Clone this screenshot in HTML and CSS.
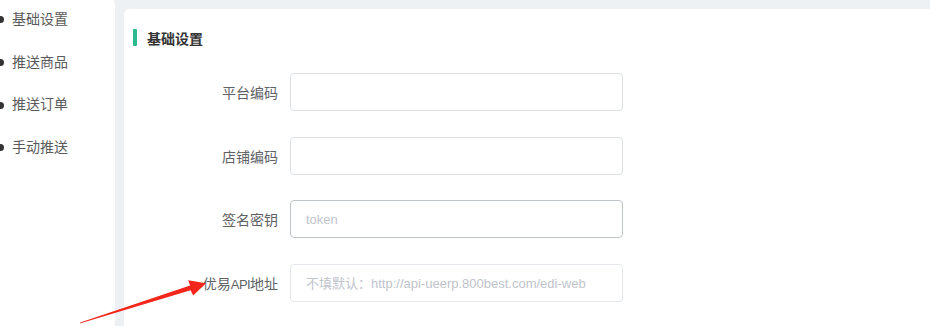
FILE: index.html
```html
<!DOCTYPE html>
<html lang="zh">
<head>
<meta charset="utf-8">
<title>基础设置</title>
<link rel="stylesheet" href="styles.css">
</head>
<body>
<div class="page">
  <aside class="sidebar">
    <ul class="menu">
      <li class="menu-item"><span class="dot"></span>基础设置</li>
      <li class="menu-item"><span class="dot"></span>推送商品</li>
      <li class="menu-item"><span class="dot"></span>推送订单</li>
      <li class="menu-item"><span class="dot"></span>手动推送</li>
    </ul>
  </aside>
  <main class="card">
    <h2 class="section-title"><span class="bar"></span>基础设置</h2>
    <form class="form">
      <div class="form-item">
        <label class="form-label">平台编码</label>
        <input class="input" type="text">
      </div>
      <div class="form-item">
        <label class="form-label">店铺编码</label>
        <input class="input" type="text">
      </div>
      <div class="form-item gap-small">
        <label class="form-label">签名密钥</label>
        <input class="input input-hover" type="text" placeholder="token">
      </div>
      <div class="form-item">
        <label class="form-label">优易<span class="latin">API</span>地址</label>
        <input class="input input-light" type="text" placeholder="不填默认：http://api-ueerp.800best.com/edi-web">
      </div>
    </form>
  </main>
  <svg class="arrow" width="930" height="326" viewBox="0 0 930 326">
    <polygon fill="#f2261b" points="79.8,323.5 190.6,290.2 193.2,295.5 206,283.2 188.2,280.2 190.1,285.5 80.2,322.5"/>
  </svg>
</div>
</body>
</html>
```

FILE: styles.css
```css
* { box-sizing: border-box; }
html, body {
  margin: 0;
  padding: 0;
}
body {
  background: #eef1f4;
  font-family: "Liberation Sans", "Noto Sans CJK SC", sans-serif;
  font-size: 14px;
  color: #606266;
  width: 930px;
  height: 326px;
  overflow: hidden;
}
.page {
  position: relative;
  display: flex;
  gap: 9px;
  height: 326px;
}
.sidebar {
  width: 115px;
  flex: none;
  background: #fff;
  border-top-right-radius: 8px;
  margin-top: -3px;
}
.menu {
  list-style: none;
  margin: 0;
  padding: 0;
}
.menu-item {
  position: relative;
  height: 42.67px;
  line-height: 42.67px;
  padding-left: 12px;
  color: #5a5a5a;
  font-size: 14px;
}
.menu-item:first-child { margin-top: 1px; }
.dot {
  position: absolute;
  left: -3px;
  top: 50%;
  width: 7px;
  height: 7px;
  margin-top: -3px;
  border-radius: 50%;
  background: #333;
}
.card {
  flex: 1;
  margin-top: 9px;
  background: #fff;
  border-top-left-radius: 6px;
  padding: 20px 0 0 9px;
}
.section-title {
  display: flex;
  align-items: center;
  gap: 10px;
  margin: 0;
  height: 17px;
  font-size: 14px;
  font-weight: bold;
  color: #333;
}
.bar {
  width: 4px;
  height: 17px;
  background: #2bb98f;
  border-radius: 1px;
}
.form {
  margin: 27px 0 0 45px;
}
.form-item {
  display: flex;
  align-items: center;
  margin-bottom: 26px;
}
.form-item:nth-child(2) { margin-bottom: 25px; }
.form-label {
  width: 112px;
  padding-right: 12px;
  text-align: right;
  color: #606266;
  font-size: 14px;
  white-space: nowrap;
}
.latin {
  letter-spacing: -0.6px;
  font-size: 13px;
}
.input {
  width: 333px;
  height: 38px;
  border: 1px solid #dcdfe6;
  border-radius: 4px;
  padding: 0 15px;
  font-family: "Liberation Sans", "Noto Sans CJK SC", sans-serif;
  font-size: 13px;
  color: #606266;
  background: #fff;
  outline: none;
}
.input::placeholder { color: #c0c4cc; }
.input-hover { border-color: #c0c4cc; }
.input-light { border-color: #e4e7ed; }
.arrow {
  position: absolute;
  left: 0;
  top: 0;
  pointer-events: none;
}
```
